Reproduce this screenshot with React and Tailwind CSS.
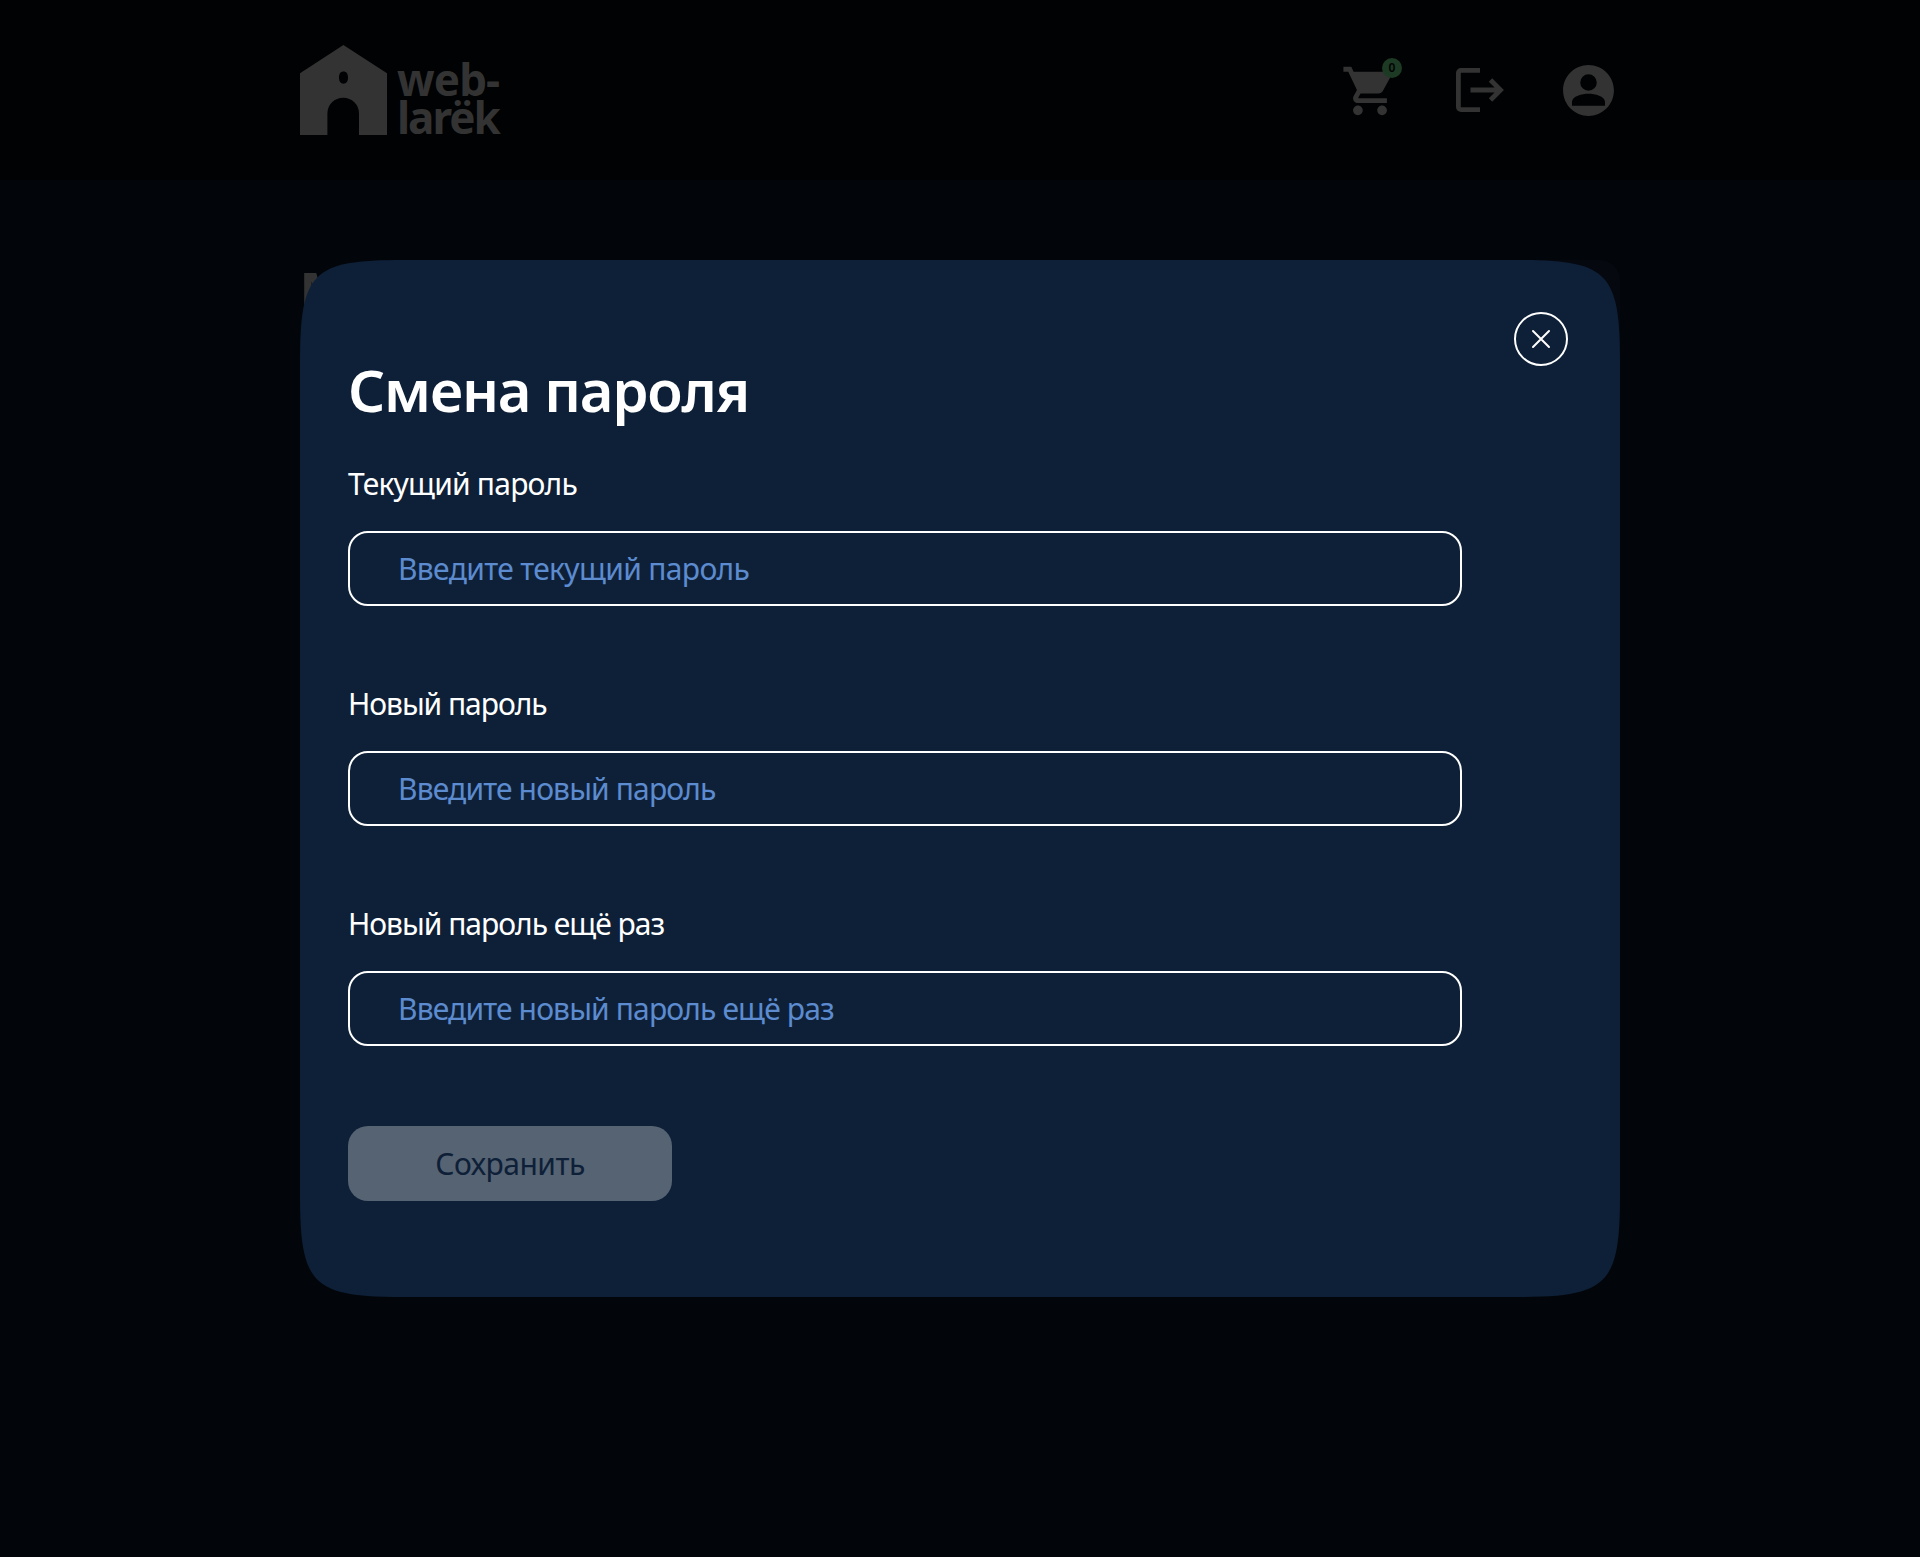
const fields = [
  { label: 'Текущий пароль', placeholder: 'Введите текущий пароль', labelTracking: 'tracking-[-0.79px]', inputTracking: 'tracking-[-0.66px]' },
  { label: 'Новый пароль', placeholder: 'Введите новый пароль', labelTracking: 'tracking-[-1.05px]', inputTracking: 'tracking-[-0.86px]' },
  { label: 'Новый пароль ещё раз', placeholder: 'Введите новый пароль ещё раз', labelTracking: 'tracking-[-1.01px]', inputTracking: 'tracking-[-0.86px]' },
];

function Logo() {
  return (
    <a className="flex h-[90px] w-[210px] text-[#333]">
      <svg className="shrink-0" width="87" height="90" viewBox="0 0 87 90" fill="currentColor">
        <path
          fillRule="evenodd"
          d="M43.4 0 87 28.3V90H59V68.5a15.8 15.8 0 0 0-31.6 0V90H0V28.3zM43.5 26.5c-2.8 0-4.5 2-4.5 6s1.700 6.200 4.500 6.200 4.500-2.200 4.500-6.200-1.700-6-4.500-6z"
        />
      </svg>
      <div className="ml-[10px] flex flex-col pt-[15px] text-[44px] font-bold leading-[38px] whitespace-nowrap">
        <span className="tracking-[-0.9px]">web-</span>
        <span className="tracking-[-2px]">larëk</span>
      </div>
    </a>
  );
}

function Header() {
  return (
    <header className="h-[180px] bg-[#010203]">
      <div className="mx-auto flex h-full w-[1320px] items-center justify-between text-[#333]">
        <Logo />
        <nav className="flex items-center pr-px">
          <div className="relative top-px size-[58px]">
            <svg width="58" height="58" viewBox="0 0 24 24" fill="currentColor">
              <path d="M7 18c-1.100 0-1.990.9-1.990 2S5.900 22 7 22s2-.9 2-2-.9-2-2-2zM1 2v2h2l3.600 7.590-1.350 2.450c-.16.28-.25.61-.25.96 0 1.100.9 2 2 2h12v-2H7.420c-.14 0-.25-.11-.25-.25l.03-.12.9-1.630h7.450c.75 0 1.410-.41 1.750-1.030l3.580-6.490A1.003 1.003 0 0 0 20 4H5.210l-.94-2H1zm16 16c-1.100 0-1.990.9-1.990 2s.89 2 1.990 2 2-.9 2-2-.9-2-2-2z" />
            </svg>
            <span className="absolute left-[41px] top-[-4px] flex size-5 items-center justify-center rounded-full bg-[#1c3a24] text-[12px] font-semibold leading-none text-[#010203]">
              0
            </span>
          </div>
          <svg className="ml-[57px]" width="48" height="44" viewBox="0 0 48 44" fill="none" stroke="currentColor">
            <path strokeWidth="4.800" d="M24 2.400H5A2.600 2.600 0 0 0 2.400 5v34A2.600 2.600 0 0 0 5 41.600h19" />
            <path strokeWidth="4.800" d="M14.500 22h30M34.500 12l10 10-10 10" />
          </svg>
          <svg className="ml-[54px]" width="61" height="61" viewBox="0 0 24 24" fill="currentColor">
            <path d="M12 2C6.480 2 2 6.480 2 12s4.480 10 10 10 10-4.480 10-10S17.520 2 12 2zm0 3.600a3.250 3.250 0 1 1 0 6.500 3.250 3.250 0 0 1 0-6.500zM5.500 18v-1.500c0-2.300 4-3.250 6.500-3.250s6.500.95 6.500 3.250V18z" />
          </svg>
        </nav>
      </div>
    </header>
  );
}

function PasswordDialog() {
  return (
    <section
      role="dialog"
      aria-label="Смена пароля"
      className="absolute left-[300px] top-[260px] h-[1037px] w-[1320px] bg-[#0e2038] pl-12 [clip-path:path('M0_103C0_12_12_0_103_0H1217C1308_0_1320_12_1320_103V934C1320_1025_1308_1037_1217_1037H103C12_1037_0_1025_0_934Z')]"
    >
      <button className="absolute right-[52px] top-[52px] flex size-[54px] items-center justify-center rounded-full border-2 border-white">
        <svg width="20" height="20" viewBox="0 0 20 20" fill="none" stroke="white" strokeWidth="2" strokeLinecap="round">
          <path d="M2 2l16 16M18 2L2 18" />
        </svg>
      </button>
      <h1 className="mt-[90px] h-[80px] text-[58px] font-semibold leading-[80px] tracking-[-1.2px] text-white">Смена пароля</h1>
      <form className="mt-[34px]">
        {fields.map((f) => (
          <label key={f.label} className="mb-[73px] block h-[147px] text-[30px] text-white">
            <span className={'block h-10 leading-10 ' + f.labelTracking}>{f.label}</span>
            <input
              type="text"
              placeholder={f.placeholder}
              className={'mt-[27px] block h-[75px] w-[1114px] rounded-[20px] border-2 border-white bg-transparent px-12 placeholder:text-[#5c8bcf] ' + f.inputTracking}
            />
          </label>
        ))}
        <button
          type="button"
          className="mt-[75px] block h-[75px] w-[324px] rounded-[20px] bg-[#566372] text-[30px] tracking-[-0.5px] text-[#0e2038]"
        >
          Сохранить
        </button>
      </form>
    </section>
  );
}

export default function App() {
  return (
    <div className="relative h-[1557px] w-[1920px] overflow-hidden bg-[#02060a] font-['Noto_Sans',sans-serif]">
      <Header />
      <main className="mx-auto flex w-[1320px] justify-between pt-20">
        <h2 className="-ml-px text-[58px] font-bold leading-[64px] text-[#333]">М</h2>
        <div className="h-[500px] w-[600px] rounded-[20px] bg-[#05080f]" />
      </main>
      <PasswordDialog />
    </div>
  );
}
